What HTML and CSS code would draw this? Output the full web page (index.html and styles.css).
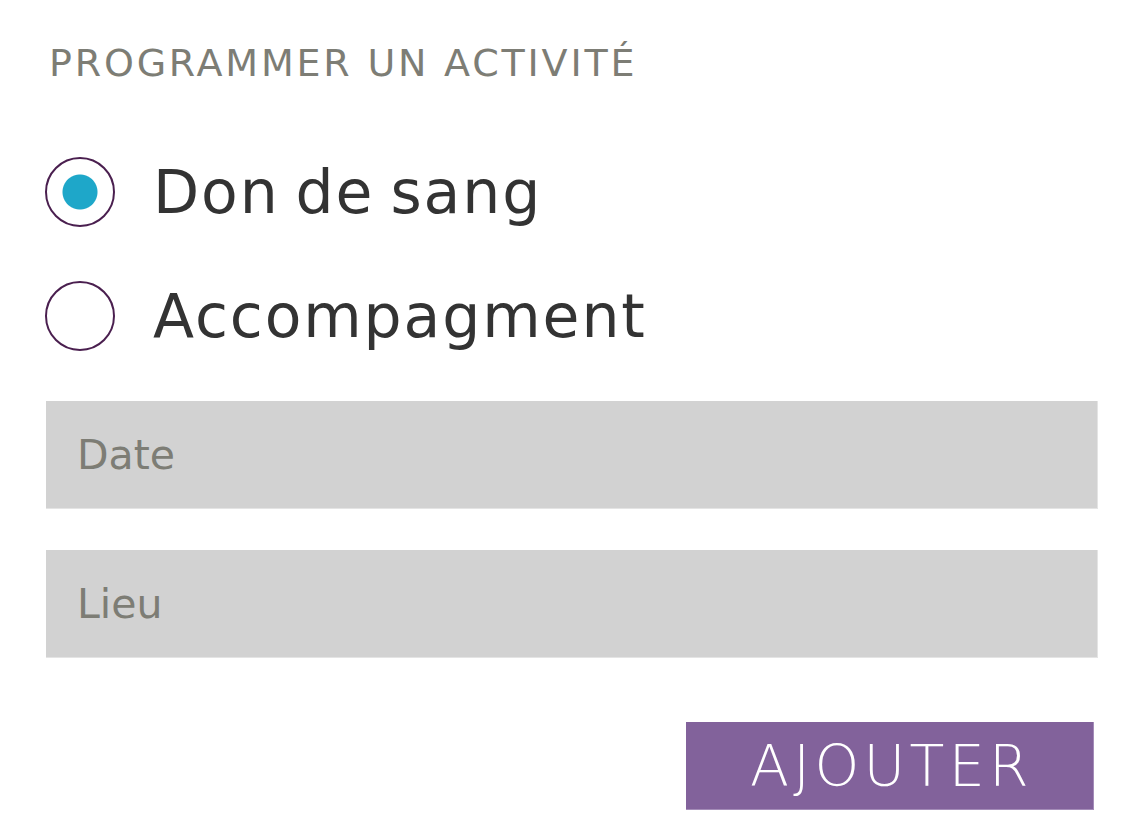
FILE: index.html
```html
<!DOCTYPE html>
<html lang="fr">
<head>
<meta charset="utf-8">
<title>Programmer une activité</title>
<link rel="stylesheet" href="styles.css">
</head>
<body>
<form class="panel">
  <h1 class="title">PROGRAMMER UN ACTIVITÉ</h1>
  <div class="choices">
    <label class="choice">
      <input class="radio" type="radio" name="type" checked>
      <span class="choice-text">Don de sang</span>
    </label>
    <label class="choice">
      <input class="radio" type="radio" name="type">
      <span class="choice-text">Accompagment</span>
    </label>
  </div>
  <div class="fields">
    <input class="field" type="text" placeholder="Date">
    <input class="field" type="text" placeholder="Lieu">
  </div>
  <div class="actions">
    <button class="submit" type="button">AJOUTER</button>
  </div>
</form>
</body>
</html>
```
FILE: styles.css
```css
* { box-sizing: border-box; }
html, body { margin: 0; padding: 0; background: #ffffff; }
body { font-family: "DejaVu Sans", "Open Sans", sans-serif; }

.panel {
  display: flex;
  flex-direction: column;
  padding: 0 39px 0 45px;
  width: 1137px;
}

.title {
  margin: 44px 0 0 4px;
  font-size: 38px;
  line-height: 39px;
  font-weight: 400;
  letter-spacing: 2.8px;
  color: #7d7d75;
}

.choices {
  display: flex;
  flex-direction: column;
  margin-top: 47px;
}

.choice {
  display: flex;
  align-items: center;
  gap: 38px;
  height: 124px;
  cursor: pointer;
}

.radio {
  appearance: none;
  -webkit-appearance: none;
  margin: 0;
  width: 70px;
  height: 70px;
  border: 2px solid #4a1f4f;
  border-radius: 50%;
  background: #ffffff;
  flex: none;
}

.radio:checked {
  background: radial-gradient(circle, #1ea7c9 0, #1ea7c9 17px, #ffffff 18px);
}

.choice-text {
  font-size: 60px;
  line-height: 61px;
  color: #333333;
  letter-spacing: 1.9px;
  word-spacing: -5px;
}

.fields {
  display: flex;
  flex-direction: column;
  gap: 41px;
  margin-top: 23px;
  padding-left: 1px;
}

.field {
  width: 100%;
  height: 108px;
  border: none;
  border-right: 1px solid #e4e4e4;
  border-bottom: 1px solid #e4e4e4;
  background: #d2d2d2;
  padding: 0 0 0 31px;
  font-family: inherit;
  font-size: 41px;
  color: #333333;
  outline: none;
}

.field::placeholder {
  color: #7d7d75;
  opacity: 1;
}

.actions {
  display: flex;
  justify-content: flex-end;
  margin-top: 64px;
  padding-right: 4px;
}

.submit {
  width: 408px;
  height: 88px;
  border: none;
  border-right: 1px solid #a48cb8;
  border-bottom: 1px solid #a48cb8;
  background: #82629b;
  color: #ffffff;
  font-family: inherit;
  font-size: 57px;
  font-weight: 200;
  letter-spacing: 4.3px;
  padding: 0 0 0 4px;
  cursor: pointer;
}
```
